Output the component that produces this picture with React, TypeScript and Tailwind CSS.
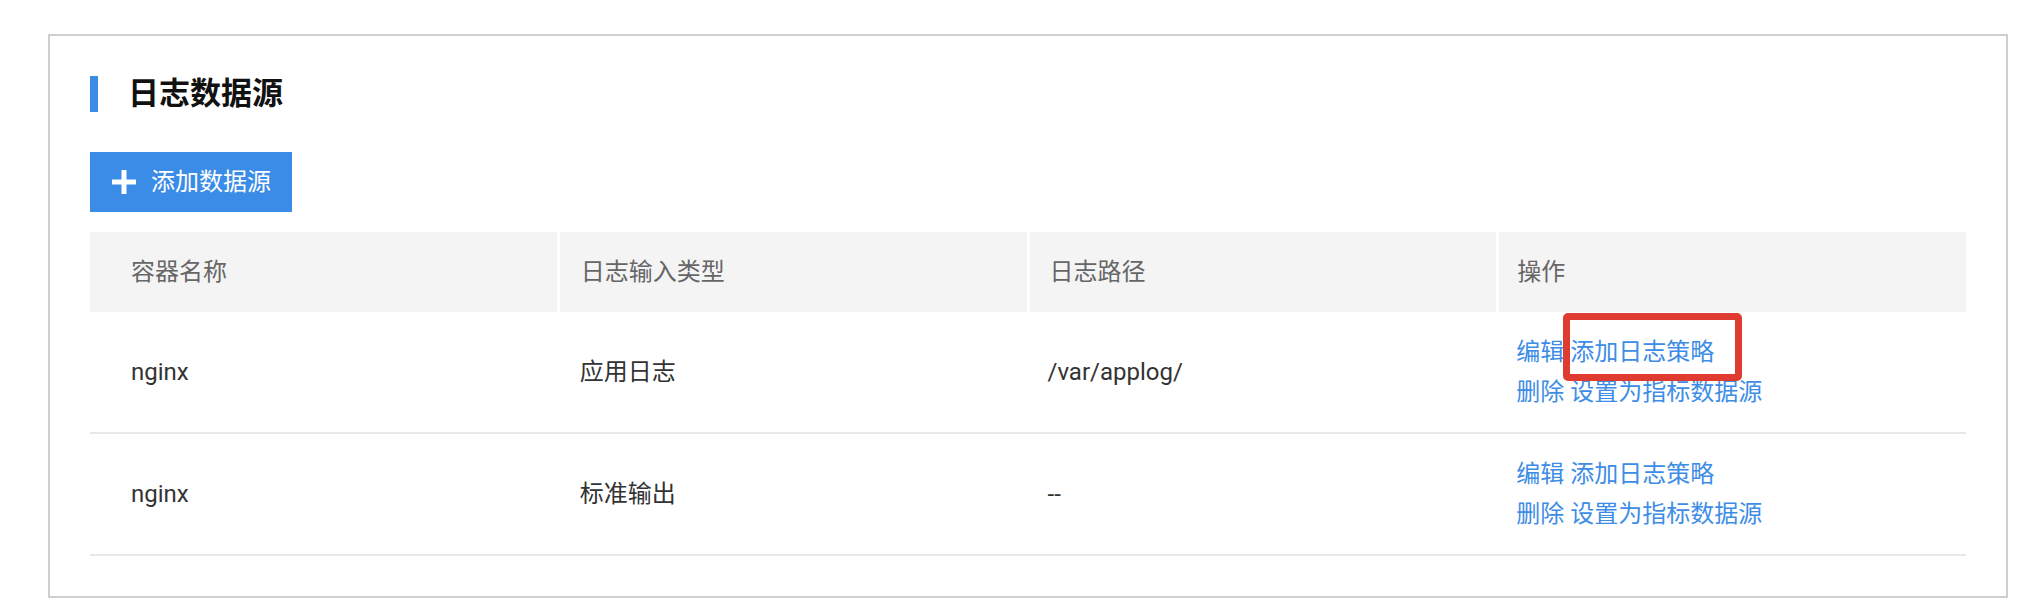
import React from "react";

const FONT = { fontFamily: 'Roboto, "Noto Sans CJK SC", sans-serif' };

function Actions({ highlight }: { highlight?: boolean }) {
  return (
    <div className="relative flex h-full flex-col justify-center pl-[17px] text-[24px] leading-[40px] text-[#3d8de6]">
      <div className="whitespace-pre">
        <span>编辑</span> <span>添加日志策略</span>
      </div>
      <div className="whitespace-pre">
        <span>删除</span> <span>设置为指标数据源</span>
      </div>
      {highlight && (
        <div className="pointer-events-none absolute left-[64px] top-[1px] h-[68px] w-[179px] rounded-[5px] border-[7px] border-[#e03b30]" />
      )}
    </div>
  );
}

function Row({
  name,
  type,
  path,
  highlight,
}: {
  name: string;
  type: string;
  path: string;
  highlight?: boolean;
}) {
  return (
    <div className="grid h-[122px] grid-cols-4 gap-x-[3px] border-b-2 border-[#e8e8e8] text-[24px] text-[#333]">
      <div className="flex items-center pl-[41px]">{name}</div>
      <div className="flex items-center pl-[20px]">{type}</div>
      <div className="flex items-center pl-[18px]">{path}</div>
      <Actions highlight={highlight} />
    </div>
  );
}

export default function App() {
  return (
    <div className="min-h-[616px] bg-white pl-[48px] pt-[34px]" style={FONT}>
      <div className="w-[1960px] border-2 border-[#cfcfcf] p-[40px]">
        <div className="flex h-[36px] items-center">
          <div className="h-[36px] w-[8px] bg-[#3b8ce6]" />
          <div className="ml-[30px] text-[31px] font-semibold leading-[36px] text-[#111]">
            日志数据源
          </div>
        </div>

        <button className="mt-[40px] flex h-[60px] w-[202px] items-center bg-[#3b8ce6] pl-[22px] text-white">
          <svg width="24" height="24" viewBox="0 0 24 24" className="shrink-0">
            <rect x="0" y="9.5" width="24" height="5" fill="white" />
            <rect x="9.5" y="0" width="5" height="24" fill="white" />
          </svg>
          <span className="ml-[15px] text-[24px] leading-[30px]">添加数据源</span>
        </button>

        <div className="mt-[20px]">
          <div className="grid h-[80px] grid-cols-4 gap-x-[3px] text-[24px] text-[#666]">
            <div className="flex items-center bg-[#f4f4f4] pl-[41px]">容器名称</div>
            <div className="flex items-center bg-[#f4f4f4] pl-[21px]">日志输入类型</div>
            <div className="flex items-center bg-[#f4f4f4] pl-[20px]">日志路径</div>
            <div className="flex items-center bg-[#f4f4f4] pl-[18px]">操作</div>
          </div>
          <Row name="nginx" type="应用日志" path="/var/applog/" highlight />
          <Row name="nginx" type="标准输出" path="--" />
        </div>
      </div>
    </div>
  );
}
